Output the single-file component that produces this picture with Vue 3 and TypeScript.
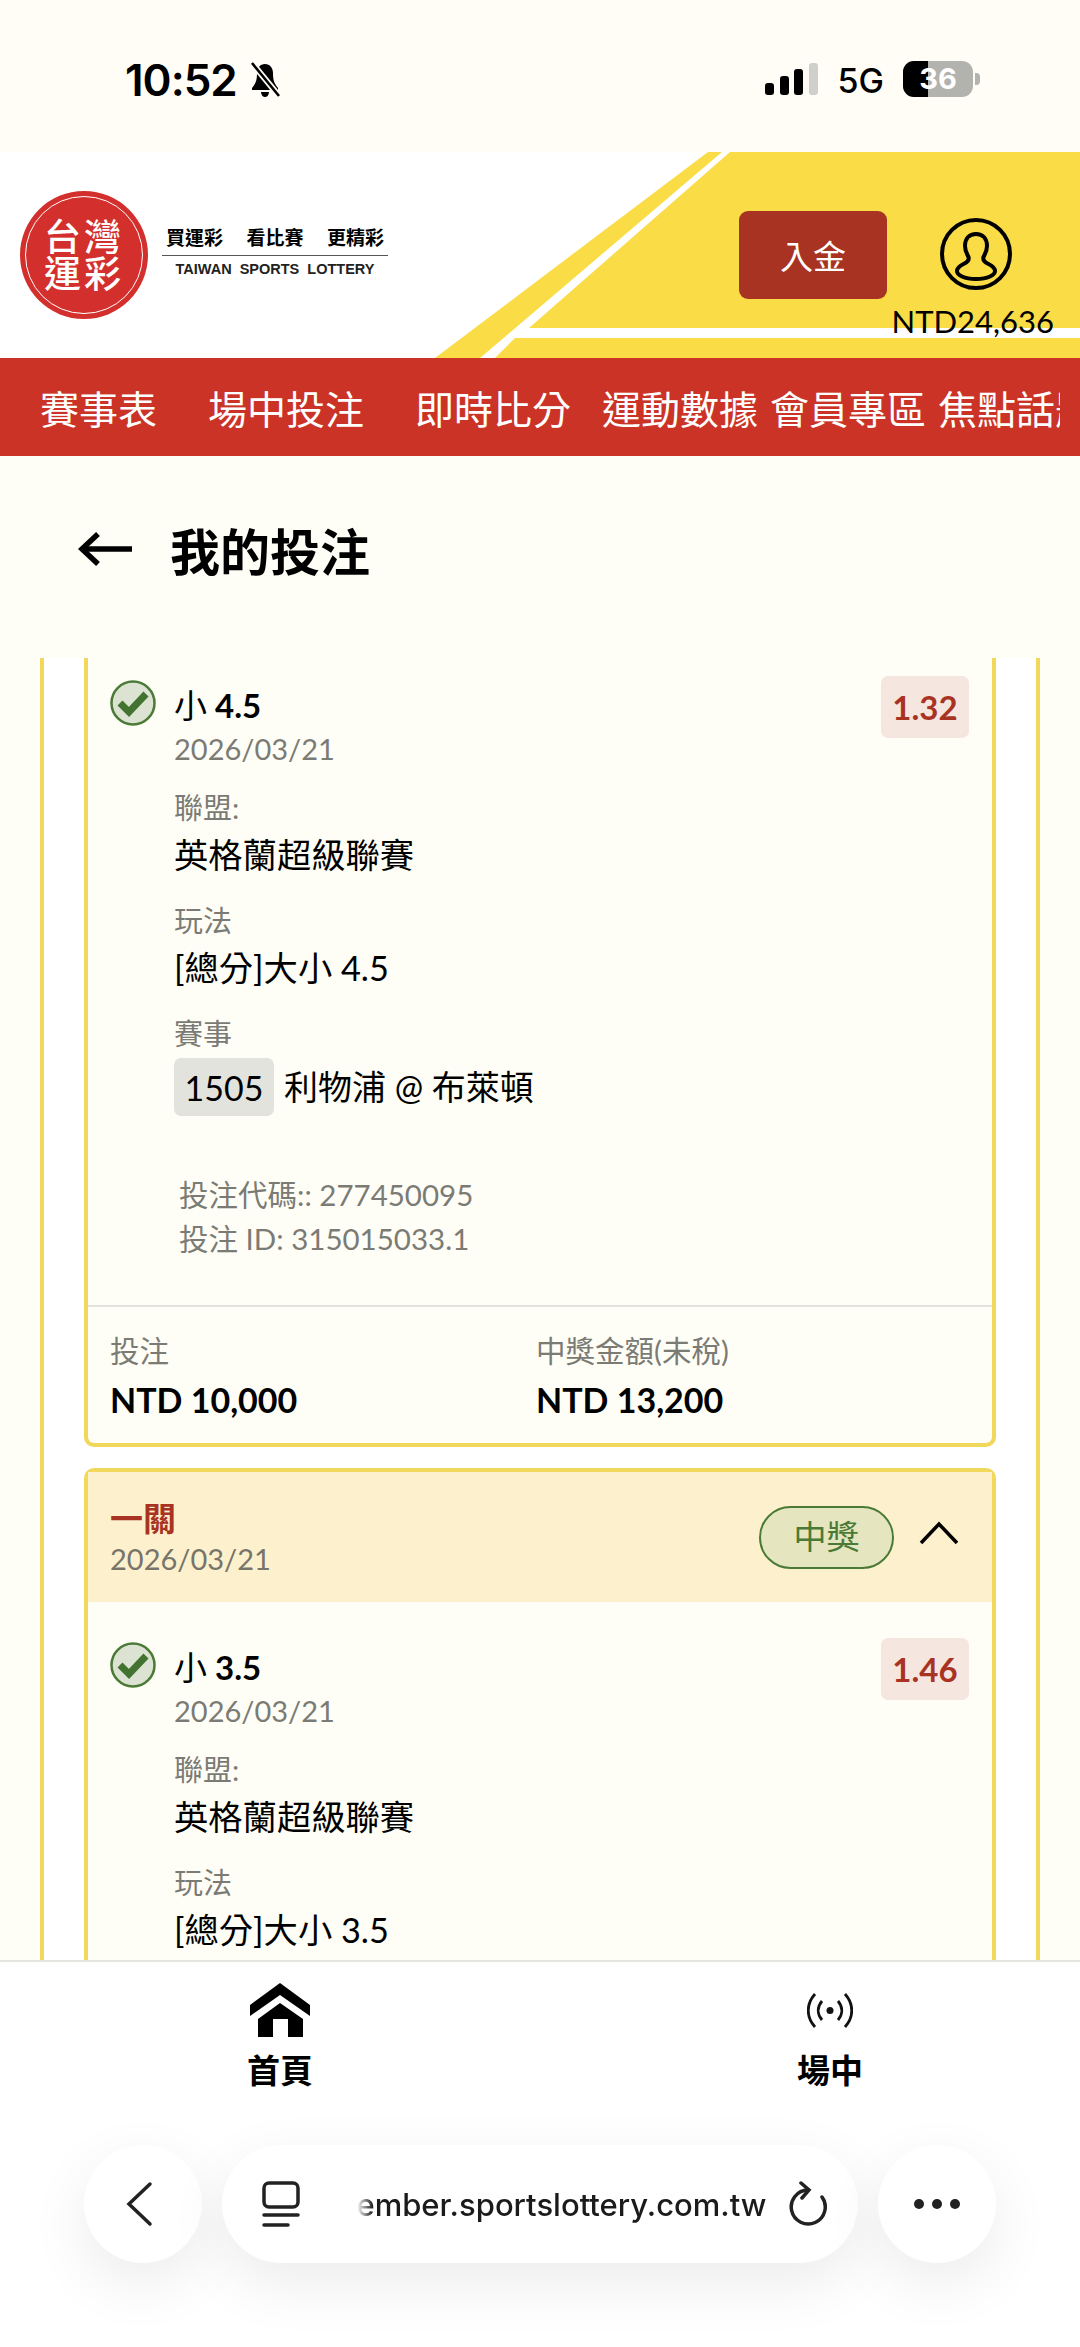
<script setup lang="ts">
interface Row {
  label: string
  value: string
}

const rows: Row[] = [
  { label: '聯盟:', value: '英格蘭超級聯賽' },
  { label: '玩法', value: '[總分]大小 4.5' },
]

const rows2: Row[] = [
  { label: '聯盟:', value: '英格蘭超級聯賽' },
  { label: '玩法', value: '[總分]大小 3.5' },
]

const navItems = ['賽事表', '場中投注', '即時比分', '運動數據', '會員專區', '焦點話題']
</script>

<template>
  <div class="screen">
    <div class="status">
      <div class="status-left">
        <span class="time">10:52</span>
        <svg class="bell" viewBox="0 0 34 36" width="36" height="36">
          <path d="M17 2c-5 0-8 4-8 9 0 7-1 10-5 15v2h26v-2c-4-5-5-8-5-15 0-5-3-9-8-9z" fill="#000" />
          <path d="M13 30h8c0 3-2 5-4 5s-4-2-4-5z" fill="#000" />
          <path d="M4 1l27 33" stroke="#fffdf6" stroke-width="6" />
          <path d="M4 1l27 33" stroke="#000" stroke-width="2.6" />
        </svg>
      </div>
      <div class="status-right">
        <div class="signal">
          <i class="s1"></i><i class="s2"></i><i class="s3"></i><i class="s4"></i>
        </div>
        <span class="net">5G</span>
        <div class="battery">
          <div class="battery-fill"></div>
          <span>36</span>
        </div>
        <div class="battery-cap"></div>
      </div>
    </div>

    <header class="head">
      <svg class="head-bg" viewBox="0 0 1080 206" preserveAspectRatio="none">
        <polygon points="708,0 722,0 480,206 435,206" fill="#fadc46" />
        <polygon points="730,0 1080,0 1080,176 529,176" fill="#fadc46" />
        <polygon points="515,186 1080,186 1080,206 495,206" fill="#fadc46" />
      </svg>
      <div class="logo">
        <div class="logo-mark">
          <div class="logo-ring"></div>
          <span>台灣</span>
          <span>運彩</span>
        </div>
        <div class="logo-text">
          <div class="slogan"><span>買運彩</span><span>看比賽</span><span>更精彩</span></div>
          <div class="logo-en">TAIWAN&nbsp; SPORTS&nbsp; LOTTERY</div>
        </div>
      </div>
      <div class="head-actions">
        <button class="deposit">入金</button>
        <div class="account">
          <svg viewBox="0 0 72 72" width="72" height="72" fill="none" stroke="#000" stroke-width="4">
            <circle cx="36" cy="36" r="34" />
            <path d="M36 16c-7 0-11 5-11 12 0 5 2 8 3.500 11 1 3-1 5-5 7-4 2-6.500 4-6.500 7 0 4 7 8 19 8s19-4 19-8c0-3-2.500-5-6.500-7-4-2-6-4-5-7 1.500-3 3.500-6 3.500-11 0-7-4-12-11-12z" />
          </svg>
          <span class="balance">NTD24,636</span>
        </div>
      </div>
    </header>

    <nav class="nav">
      <div class="nav-scroll">
        <span v-for="item in navItems" :key="item" class="nav-item">{{ item }}</span>
      </div>
    </nav>

    <div class="title-row">
      <svg viewBox="0 0 54 36" width="54" height="36" fill="none" stroke="#000" stroke-width="5.5">
        <path d="M54 18H4" />
        <path d="M20 3L4 18l16 15" />
      </svg>
      <h1>我的投注</h1>
    </div>

    <div class="outer">
      <section class="card first">
        <div class="bet">
          <svg class="check" viewBox="0 0 46 46" width="46" height="46">
            <circle cx="23" cy="23" r="21.500" fill="#dde3d3" stroke="#4a7a36" stroke-width="2.500" />
            <path d="M10 23l9 9 17-18" fill="none" stroke="#437331" stroke-width="7" />
          </svg>
          <div class="bet-main">
            <div class="bet-top">
              <div>
                <div class="pick"><span class="pick-cjk">小</span> 4.5</div>
                <div class="date">2026/03/21</div>
              </div>
              <div class="odds">1.32</div>
            </div>
            <div v-for="r in rows" :key="r.label" class="row">
              <div class="label">{{ r.label }}</div>
              <div class="value">{{ r.value }}</div>
            </div>
            <div class="row">
              <div class="label">賽事</div>
              <div class="match">
                <span class="code">1505</span>
                <span class="value">利物浦 @ 布萊頓</span>
              </div>
            </div>
            <div class="ids">
              <div>投注代碼:: 277450095</div>
              <div>投注 ID: 315015033.1</div>
            </div>
          </div>
        </div>
        <div class="totals">
          <div class="total">
            <div class="total-label">投注</div>
            <div class="total-value">NTD 10,000</div>
          </div>
          <div class="total">
            <div class="total-label">中獎金額(未稅)</div>
            <div class="total-value">NTD 13,200</div>
          </div>
        </div>
      </section>

      <section class="card second">
        <div class="card-head">
          <div>
            <div class="kind">一關</div>
            <div class="date">2026/03/21</div>
          </div>
          <div class="head-right">
            <span class="won">中獎</span>
            <svg class="chevron" viewBox="0 0 40 24" width="40" height="24" fill="none" stroke="#000" stroke-width="3.500">
              <path d="M2 22L20 3l18 19" />
            </svg>
          </div>
        </div>
        <div class="bet">
          <svg class="check" viewBox="0 0 46 46" width="46" height="46">
            <circle cx="23" cy="23" r="21.500" fill="#dde3d3" stroke="#4a7a36" stroke-width="2.500" />
            <path d="M10 23l9 9 17-18" fill="none" stroke="#437331" stroke-width="7" />
          </svg>
          <div class="bet-main">
            <div class="bet-top">
              <div>
                <div class="pick"><span class="pick-cjk">小</span> 3.5</div>
                <div class="date">2026/03/21</div>
              </div>
              <div class="odds">1.46</div>
            </div>
            <div v-for="r in rows2" :key="r.label" class="row">
              <div class="label">{{ r.label }}</div>
              <div class="value">{{ r.value }}</div>
            </div>
          </div>
        </div>
      </section>
    </div>

    <div class="bottom">
      <div class="tabs">
        <div class="tab">
          <svg viewBox="0 0 60 54" width="60" height="54" fill="#000">
            <path d="M30 0L0 22v11L30 12l30 21V22z" />
            <path d="M30 20L8 36v18h15V36h15v18h15V36z" />
          </svg>
          <span>首頁</span>
        </div>
        <div class="tab">
          <svg class="radio" viewBox="0 0 46 35" width="46" height="35" fill="none" stroke="#111" stroke-width="2.800">
            <circle cx="23" cy="17.500" r="3.500" fill="#111" stroke="none" />
            <path d="M15 8c-5 6-5 13 0 19M31 8c5 6 5 13 0 19" />
            <path d="M8 1c-9 10-9 23 0 33M38 1c9 10 9 23 0 33" />
          </svg>
          <span>場中</span>
        </div>
      </div>
      <div class="browser">
        <div class="pill round">
          <svg class="back" viewBox="0 0 28 46" width="28" height="46" fill="none" stroke="#222" stroke-width="3.500" stroke-linecap="round">
            <path d="M25 3L4 23l21 20" />
          </svg>
        </div>
        <div class="pill url">
          <svg viewBox="0 0 38 46" width="38" height="46" fill="none" stroke="#222" stroke-width="3.500" stroke-linecap="round">
            <rect x="2" y="2" width="34" height="24" rx="5" />
            <path d="M2 34h34M2 44h24" />
          </svg>
          <div class="url-text"><span>ember.sportslottery.com.tw</span></div>
          <svg viewBox="0 0 40 46" width="40" height="46" fill="none" stroke="#222" stroke-width="3.500" stroke-linecap="round">
            <path d="M20 9A17 17 0 1 0 34 16" />
            <path d="M13 2l8 7-7 8" />
          </svg>
        </div>
        <div class="pill round">
          <svg viewBox="0 0 48 12" width="48" height="12" fill="#222">
            <circle cx="6" cy="6" r="5" />
            <circle cx="24" cy="6" r="5" />
            <circle cx="42" cy="6" r="5" />
          </svg>
        </div>
      </div>
    </div>
  </div>
</template>

<style>
html,
body {
  margin: 0;
  background: #fffef6;
}
</style>

<style scoped>
.screen {
  width: 1080px;
  height: 2347px;
  overflow: hidden;
  display: flex;
  flex-direction: column;
  background: #fffef6;
  font-family: Lato, "Noto Sans CJK TC", sans-serif;
  color: #000;
}

.status {
  height: 152px;
  flex: none;
  display: flex;
  justify-content: space-between;
  padding: 56px 0 0 125px;
  box-sizing: border-box;
  background: #fffdf6;
}

.status-left {
  display: flex;
  align-items: flex-start;
  gap: 10px;
}

.time {
  font-family: Inter, sans-serif;
  font-size: 44px;
  line-height: 48px;
  font-weight: 600;
  letter-spacing: -1px;
}

.bell {
  margin-top: 6px;
}

.status-right {
  display: flex;
  align-items: flex-start;
  padding: 0 100px 0 0;
}

.signal {
  display: flex;
  align-items: flex-end;
  gap: 5.500px;
  height: 32px;
  margin: 7px 20px 0 0;
}

.signal i {
  display: block;
  width: 9px;
  border-radius: 3px;
  background: #000;
}

.signal .s1 { height: 12px; }
.signal .s2 { height: 19px; }
.signal .s3 { height: 26px; }
.signal .s4 { height: 32px; background: #cfcfcb; }

.net {
  font-family: Inter, sans-serif;
  font-size: 34px;
  line-height: 38px;
  font-weight: 500;
  margin: 6px 19px 0 0;
}

.battery {
  width: 70px;
  height: 36px;
  border-radius: 11px;
  background: #b2b2ae;
  position: relative;
  overflow: hidden;
  margin-top: 5px;
  text-align: center;
}

.battery-fill {
  position: absolute;
  left: 0;
  top: 0;
  bottom: 0;
  width: 25px;
  background: #000;
}

.battery span {
  display: block;
  position: relative;
  font-family: Inter, sans-serif;
  font-size: 29px;
  line-height: 36px;
  font-weight: 700;
  color: #fff;
}

.battery-cap {
  width: 5px;
  height: 12px;
  margin: 17px 0 0 2px;
  border-radius: 0 4px 4px 0;
  background: #b2b2ae;
}

.head {
  height: 206px;
  flex: none;
  position: relative;
  background: #fff;
  display: flex;
  justify-content: space-between;
}

.head-bg {
  position: absolute;
  inset: 0;
  width: 100%;
  height: 100%;
}

.logo {
  position: relative;
  display: flex;
  align-items: center;
  padding-left: 20px;
  gap: 14px;
  margin-top: -1px;
}

.logo-mark {
  width: 128px;
  height: 128px;
  border-radius: 50%;
  background: #d3302d;
  color: #fff;
  position: relative;
  display: flex;
  flex-direction: column;
  align-items: center;
  justify-content: center;
  font-size: 37px;
  line-height: 37px;
  letter-spacing: 3px;
  font-weight: 500;
}

.logo-ring {
  position: absolute;
  inset: 5px;
  border: 1.500px solid #fff;
  border-radius: 50%;
}

.logo-text {
  width: 226px;
  margin-top: -2px;
}

.slogan {
  display: flex;
  justify-content: space-between;
  padding: 0 4px 4px;
  font-size: 19px;
  line-height: 26px;
  font-weight: 700;
  border-bottom: 1.500px solid #555;
}

.logo-en {
  font-family: "Liberation Sans", sans-serif;
  font-size: 14.500px;
  line-height: 26px;
  font-weight: 700;
  color: #222;
  text-align: center;
  white-space: nowrap;
}

.head-actions {
  position: relative;
  display: flex;
  align-items: flex-start;
  padding: 59px 68px 0 0;
  gap: 53px;
}

.deposit {
  width: 148px;
  height: 88px;
  border: 0;
  border-radius: 9px;
  background: #a93323;
  color: #fff;
  font-family: inherit;
  font-size: 33px;
  padding: 0;
}

.account {
  width: 72px;
  height: 72px;
  position: relative;
  margin-top: 7px;
}

.balance {
  position: absolute;
  top: 88px;
  left: 50%;
  transform: translateX(-52%);
  font-size: 31px;
  line-height: 30px;
  white-space: nowrap;
}

.nav {
  height: 98px;
  flex: none;
  background: #cb3327;
  color: #fff;
  padding: 0 20px 0 40px;
  font-size: 39px;
  white-space: nowrap;
}

.nav-scroll {
  height: 100%;
  display: flex;
  align-items: center;
  overflow: hidden;
}

.nav-item {
  margin-right: 51px;
  flex: none;
}

.nav-item:nth-child(3) {
  margin-right: 31px;
}

.nav-item:nth-child(n + 4) {
  margin-right: 12px;
}

.title-row {
  height: 202px;
  flex: none;
  box-sizing: border-box;
  padding: 0 0 16px 78px;
  display: flex;
  align-items: center;
  gap: 38px;
}

.title-row h1 {
  margin: 0;
  font-size: 50px;
  font-weight: 700;
}

.outer {
  width: 1000px;
  height: 1302px;
  flex: none;
  margin-left: 40px;
  overflow: hidden;
  box-sizing: border-box;
  border: solid #f1d75a;
  border-width: 0 4px;
  background: #fff;
  padding: 0 40px;
  display: flex;
  flex-direction: column;
  gap: 21px;
}

.card {
  border: 4px solid #f1d75a;
  border-radius: 10px;
  background: #fffef6;
  flex: none;
}

.card.first {
  border-top: 0;
  border-radius: 0 0 10px 10px;
}

.card.second {
  padding-bottom: 200px;
}

.bet {
  display: flex;
  padding: 22px 23px 0 22px;
  gap: 18px;
}

.card.second .bet {
  padding-top: 40px;
}

.check {
  flex: none;
}

.bet-main {
  flex: 1;
}

.bet-top {
  display: flex;
  justify-content: space-between;
  align-items: flex-start;
}

.pick {
  font-size: 33px;
  line-height: 50px;
  font-weight: 700;
}

.pick-cjk {
  font-weight: 400;
}

.date {
  font-size: 29px;
  line-height: 37px;
  color: #7b7b75;
}

.odds {
  width: 88px;
  height: 62px;
  background: #f5e6df;
  border-radius: 7px;
  color: #a93323;
  font-size: 33px;
  line-height: 62px;
  font-weight: 700;
  text-align: center;
  margin-top: -4px;
}

.row {
  margin-top: 19px;
}

.label {
  font-size: 29px;
  line-height: 44px;
  color: #7b7b75;
}

.value {
  font-size: 34.300px;
  line-height: 50px;
}

.match {
  display: flex;
  align-items: center;
  gap: 10px;
  margin-top: 2px;
}

.match .value {
  font-size: 34px;
}

.code {
  width: 100px;
  height: 58px;
  border-radius: 7px;
  background: #e3e3de;
  font-size: 34px;
  line-height: 60px;
  text-align: center;
}

.ids {
  margin: 57px 0 0 5px;
  padding-bottom: 44px;
  font-size: 29.500px;
  line-height: 44px;
  color: #7b7b75;
}

.totals {
  display: flex;
  border-top: 2px solid #e3e3de;
  padding: 22px 22px 18px;
}

.total {
  width: 426px;
}

.total-label {
  font-size: 29.500px;
  line-height: 44px;
  color: #7b7b75;
}

.total-value {
  margin-top: 2px;
  font-size: 34px;
  line-height: 50px;
  font-weight: 700;
}

.card-head {
  height: 130px;
  background: #fdf1cd;
  display: flex;
  justify-content: space-between;
  align-items: center;
  padding: 0 33px 0 22px;
}

.kind {
  font-size: 33px;
  line-height: 44px;
  font-weight: 700;
  color: #a93323;
}

.card-head .date {
  line-height: 38px;
  color: #77746a;
}

.head-right {
  display: flex;
  align-items: center;
  gap: 25px;
}

.chevron {
  margin-bottom: 8px;
}

.won {
  width: 135px;
  height: 63px;
  box-sizing: border-box;
  border: 2.500px solid #4a7a36;
  border-radius: 32px;
  background: #e5e6c0;
  color: #4a7a36;
  font-size: 33px;
  line-height: 57px;
  text-align: center;
}

.bottom {
  flex: 1;
  background: #fff;
  border-top: 2px solid #e4e4e0;
}

.tabs {
  display: flex;
  padding: 21px 0 0 140px;
  gap: 270px;
}

.tab {
  width: 280px;
  height: 106px;
  display: flex;
  flex-direction: column;
  align-items: center;
  justify-content: flex-end;
  gap: 14px;
  font-size: 33px;
  line-height: 38px;
  font-weight: 700;
}

.radio {
  margin-bottom: 9px;
}

.browser {
  display: flex;
  justify-content: center;
  gap: 20px;
  margin-top: 56px;
}

.pill {
  height: 118px;
  border-radius: 59px;
  background: #fff;
  box-shadow: 0 20px 60px rgba(0, 0, 0, 0.08);
  display: flex;
  align-items: center;
  justify-content: center;
}

.round {
  width: 118px;
}

.back {
  margin-right: 9px;
}

.url {
  width: 636px;
  box-sizing: border-box;
  padding: 0 30px 0 40px;
  justify-content: space-between;
}

.url-text {
  width: 410px;
  margin-left: 35px;
  overflow: hidden;
  display: flex;
  justify-content: flex-end;
  font-family: Inter, sans-serif;
  font-size: 31px;
  font-weight: 500;
  color: #1b1b1b;
  white-space: nowrap;
  -webkit-mask-image: linear-gradient(to right, transparent, #000 16px);
  mask-image: linear-gradient(to right, transparent, #000 16px);
}

.url-text span {
  flex: none;
}
</style>
